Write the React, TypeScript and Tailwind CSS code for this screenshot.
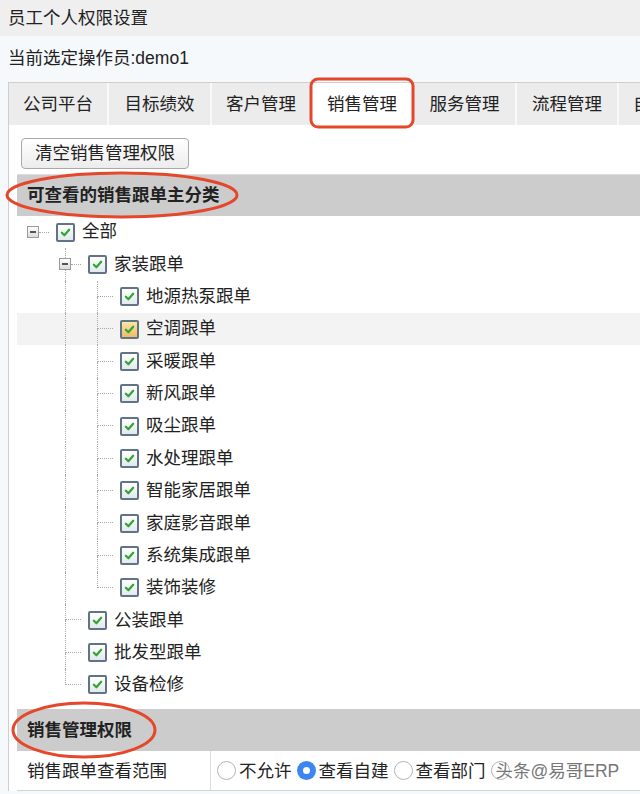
import React from "react";

type Node = { label: string; level: number; kind: "root" | "parent" | "leaf"; last?: boolean; lines: number[]; hover?: boolean };

const tabs: [string, string][] = [
  ["公司平台", "w-[100px] justify-center"],
  ["目标绩效", "w-[103px] justify-center"],
  ["客户管理", "w-[100px] justify-center"],
  ["销售管理", "w-[102px] justify-center"],
  ["服务管理", "w-[103px] justify-center"],
  ["流程管理", "w-[102px] justify-center"],
  ["自定义", "w-[100px] justify-start pl-[14px]"],
];

const nodes: Node[] = [
  { label: "全部", level: 0, kind: "root", lines: [] },
  { label: "家装跟单", level: 1, kind: "parent", lines: [] },
  ...["地源热泵跟单", "空调跟单", "采暖跟单", "新风跟单", "吸尘跟单", "水处理跟单", "智能家居跟单", "家庭影音跟单", "系统集成跟单", "装饰装修"].map(
    (label, i, arr): Node => ({ label, level: 2, kind: "leaf", last: i === arr.length - 1, lines: [1], hover: label === "空调跟单" })
  ),
  { label: "公装跟单", level: 1, kind: "leaf", lines: [] },
  { label: "批发型跟单", level: 1, kind: "leaf", lines: [] },
  { label: "设备检修", level: 1, kind: "leaf", last: true, lines: [] },
];

function Check({ hover }: { hover?: boolean }) {
  return (
    <span
      className={`w-[19px] h-[19px] border-2 border-[#607486] rounded-[2px] flex items-center justify-center shrink-0 ${
        hover ? "bg-gradient-to-b from-[#fbe7a6] to-[#f0b964]" : "bg-gradient-to-b from-white to-[#e4e8ec]"
      }`}
    >
      <svg viewBox="0 0 12 12" className="w-[11px] h-[11px]">
        <path d="M2 6.2 L4.8 9 L10 3" fill="none" stroke="#35a535" strokeWidth="2.4" strokeLinecap="round" strokeLinejoin="round" />
      </svg>
    </span>
  );
}

function Minus() {
  return (
    <span className="w-[12px] h-[12px] border border-[#9a9a9a] bg-gradient-to-b from-white to-[#dcdcdc] flex items-center justify-center shrink-0">
      <span className="w-[6px] h-[2px] bg-[#555]" />
    </span>
  );
}

function Radio({ checked }: { checked?: boolean }) {
  return checked ? (
    <span className="w-[19px] h-[19px] rounded-full bg-[#3d86f0] flex items-center justify-center shrink-0">
      <span className="w-[7px] h-[7px] rounded-full bg-white" />
    </span>
  ) : (
    <span className="w-[19px] h-[19px] rounded-full border border-[#b5b5b5] bg-white shrink-0" />
  );
}

function TreeRow({ n }: { n: Node }) {
  const cols = [];
  for (let c = 0; c <= n.level; c++) {
    if (c < n.level) {
      cols.push(
        <div key={c} className="w-[32px] h-full shrink-0">
          {n.lines.includes(c) && <div className="ml-[16px] h-full border-l border-dotted border-[#a8a8a8]" />}
        </div>
      );
    } else if (n.kind === "leaf") {
      cols.push(
        <div key={c} className="w-[32px] h-full shrink-0 flex flex-col">
          <div className="ml-[16px] h-1/2 border-l border-b border-dotted border-[#a8a8a8]" />
          <div className={`ml-[16px] h-1/2 ${n.last ? "" : "border-l border-dotted border-[#a8a8a8]"}`} />
        </div>
      );
    } else {
      cols.push(
        <div key={c} className="w-[32px] h-full shrink-0 flex flex-col">
          <div className={`ml-[16px] h-[10px] ${n.kind === "parent" ? "border-l border-dotted border-[#a8a8a8]" : ""}`} />
          <div className="flex items-center ml-[10px]">
            <Minus />
            <span className="w-[12px] border-b border-dotted border-[#a8a8a8]" />
          </div>
          <div className={`ml-[16px] flex-1 ${n.kind === "parent" ? "border-l border-dotted border-[#a8a8a8]" : ""}`} />
        </div>
      );
    }
  }
  return (
    <div className={`flex items-stretch h-[32.35px] ${n.hover ? "bg-[#f3f3f3]" : ""}`}>
      {cols}
      <div className="flex items-center ml-[7px] gap-[7px]">
        <Check hover={n.hover} />
        <span className="text-[17.5px] text-[#222] leading-none whitespace-nowrap">{n.label}</span>
      </div>
    </div>
  );
}

export default function App() {
  return (
    <div
      className="relative w-[640px] h-[794px] overflow-hidden bg-[#f6f9fc]"
      style={{ fontFamily: '"Liberation Sans", "Noto Sans CJK SC", sans-serif' }}
    >
      {/* Title */}
      <div className="h-[36px] bg-[#efefef] flex items-center px-[8px] text-[17.5px] text-[#222]">员工个人权限设置</div>
      <div className="h-[44px] flex items-center px-[8px] text-[17.5px] text-[#222]">当前选定操作员:demo1</div>

      <div className="ml-[8px] mt-[2px] border-l border-t border-[#cfcfcf] bg-white w-[720px]">
        {/* Tabs */}
        <div className="flex h-[42px] bg-[#ececec]">
          {tabs.map(([t, w]) => (
            <div
              key={t}
              className={`${w} shrink-0 h-full flex items-center whitespace-nowrap text-[17.5px] text-[#222] border-r-2 border-[#f9f9f9] ${
                t === "销售管理" ? "bg-white" : "bg-[#ececec]"
              }`}
            >
              {t}
            </div>
          ))}
        </div>

        <div className="pl-[8px] pt-[13px]">
          <button className="ml-[4px] h-[31px] px-[13px] border border-[#a9a9a9] rounded-[4px] bg-gradient-to-b from-white to-[#ececec] text-[17.5px] text-[#222] leading-none">
            清空销售管理权限
          </button>

          <div className="mt-[5px] h-[42px] bg-[#cccccc] border-t border-[#dddddd] flex items-center pl-[10px] text-[17.5px] font-bold text-[#222]">
            可查看的销售跟单主分类
          </div>

          <div>
            {nodes.map((n) => (
              <TreeRow key={n.label} n={n} />
            ))}
          </div>

          <div className="mt-[8px] h-[42px] bg-[#cccccc] flex items-center pl-[10px] text-[17.5px] font-bold text-[#222]">
            销售管理权限
          </div>
          <div className="flex h-[40px] border-b border-[#d5d5d5] text-[17.5px] text-[#222] whitespace-nowrap">
            <div className="w-[194px] shrink-0 flex items-center pl-[10px] border-r border-[#dcdcdc]">销售跟单查看范围</div>
            <div className="flex items-center pl-[6px]">
              <Radio />
              <span className="ml-[3px] mr-[5px]">不允许</span>
              <Radio checked />
              <span className="ml-[3px] mr-[5px]">查看自建</span>
              <Radio />
              <span className="ml-[3px] mr-[5px]">查看部门</span>
              <Radio />
              <span className="-ml-[14px] text-[#555] opacity-80">头条@易哥ERP</span>
            </div>
          </div>
        </div>
      </div>

      {/* Red annotation marks */}
      <svg className="absolute inset-0 pointer-events-none" width="640" height="794" viewBox="0 0 640 794">
        <rect x="311" y="79" width="102" height="48" rx="7" fill="none" stroke="#e5472b" strokeWidth="3" />
        <ellipse cx="122" cy="195" rx="115" ry="22" fill="none" stroke="#e5472b" strokeWidth="3" />
        <ellipse cx="84" cy="730" rx="71" ry="27" fill="none" stroke="#e5472b" strokeWidth="3" />
      </svg>
    </div>
  );
}
